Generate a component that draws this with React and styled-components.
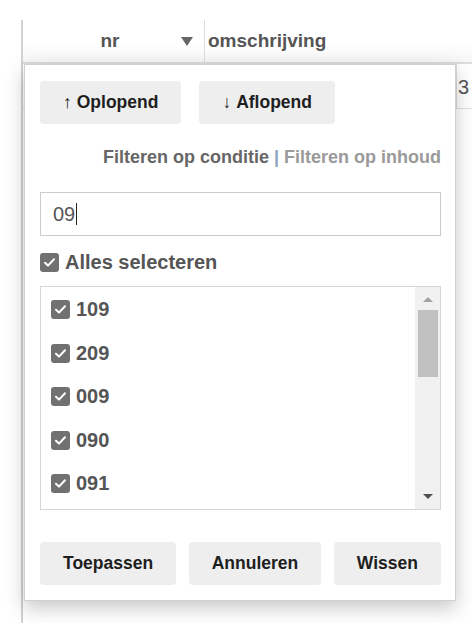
import React from 'react';
import styled, { createGlobalStyle } from 'styled-components';

const GlobalStyle = createGlobalStyle`
  html, body {
    margin: 0;
    padding: 0;
    background: #fff;
  }
  body {
    font-family: "Liberation Sans", Arial, sans-serif;
    color: #555;
  }
`;

const Page = styled.div`
  position: relative;
  width: 472px;
  height: 623px;
  overflow: hidden;
  padding: 20px 0 0 21px;
  box-sizing: border-box;
`;

const Grid = styled.div`
  height: 100%;
  border-left: 2px solid #d2d2d2;
`;

const HeaderRow = styled.div`
  display: flex;
  height: 42px;
  border-bottom: 2px solid #dcdcdc;
  background: linear-gradient(#fff 55%, #f6f6f6);
`;

const HeaderCell = styled.div`
  display: flex;
  align-items: center;
  box-sizing: border-box;
  width: ${(p) => p.$width || 'auto'};
  padding-left: ${(p) => p.$padLeft || '0'};
  border-right: ${(p) => (p.$divider ? '1px solid #dcdcdc' : 'none')};
  font-size: 19px;
  font-weight: bold;
  color: #555;
`;

const HeaderLabel = styled.span`
  flex: 1;
  text-align: ${(p) => p.$align || 'left'};
`;

const SortTriangle = styled.span`
  width: 0;
  height: 0;
  margin: 1px 11px 0 0;
  border-left: 6px solid transparent;
  border-right: 6px solid transparent;
  border-top: 9px solid #666;
`;

const BodyRow = styled.div`
  display: flex;
  height: 44px;
  border-bottom: 1px solid #e2e2e2;
`;

const BodyCell = styled.div`
  box-sizing: border-box;
  width: ${(p) => p.$width || 'auto'};
  flex: ${(p) => (p.$grow ? 1 : 'none')};
  padding: 13px 0 0 1px;
  border-left: ${(p) => (p.$divider ? '1px solid #dcdcdc' : 'none')};
  font-size: 20px;
  line-height: 20px;
  color: #555;
`;

const Panel = styled.div`
  position: absolute;
  left: 24px;
  top: 64px;
  width: 432px;
  height: 537px;
  box-sizing: border-box;
  display: flex;
  flex-direction: column;
  padding: 16px 14px 15px 15px;
  background: #fff;
  border: 1px solid #cfcfcf;
  box-shadow: 0 7px 18px rgba(0, 0, 0, 0.22);
`;

const SortRow = styled.div`
  display: flex;
  gap: 18px;
`;

const GreyButton = styled.button`
  height: 43px;
  padding: 0 ${(p) => p.$pad || '23px'};
  border: none;
  border-radius: 4px;
  background: #eeeeee;
  color: #1e1e1e;
  font-family: "Liberation Sans", Arial, sans-serif;
  font-size: 17.5px;
  font-weight: bold;
  cursor: pointer;
`;

const Arrow = styled.span`
  font-weight: normal;
  margin-right: 5px;
`;

const FilterTabs = styled.div`
  margin-top: 22px;
  text-align: right;
  font-size: 18px;
  line-height: 22px;
  font-weight: bold;
`;

const FilterTab = styled.span`
  color: ${(p) => (p.$active ? '#666' : '#9a9a9a')};
`;

const Separator = styled.span`
  color: #8aa4c0;
`;

const SearchBox = styled.div`
  margin-top: 24px;
  height: 44px;
  box-sizing: border-box;
  display: flex;
  align-items: center;
  padding-left: 12px;
  border: 1px solid #cccccc;
  font-size: 20px;
  color: #555;
`;

const Caret = styled.span`
  width: 1px;
  height: 22px;
  margin-left: 1px;
  background: #222;
`;

const CheckRow = styled.label`
  display: flex;
  align-items: center;
  gap: 6px;
  height: ${(p) => p.$height || '26px'};
  padding-top: ${(p) => p.$nudge || '0'};
  box-sizing: border-box;
  font-size: 20px;
  font-weight: bold;
  color: #555;
`;

const SelectAll = styled(CheckRow)`
  margin-top: 13px;
`;

const Box = styled.span`
  width: 19px;
  height: 19px;
  flex: none;
  display: flex;
  align-items: center;
  justify-content: center;
  border-radius: 3px;
  background: #717171;
`;

const ListBox = styled.div`
  margin-top: 11px;
  height: 224px;
  box-sizing: border-box;
  display: flex;
  border: 1px solid #d6d6d6;
`;

const Items = styled.div`
  flex: 1;
  padding-left: 10px;
  overflow: hidden;
`;

const Scrollbar = styled.div`
  width: 25px;
  display: flex;
  flex-direction: column;
  align-items: center;
  background: #f1f1f1;
`;

const ScrollArrow = styled.span`
  width: 0;
  height: 0;
  margin: ${(p) => (p.$down ? 'auto 0 10px' : '10px 0 8px')};
  border-left: 5px solid transparent;
  border-right: 5px solid transparent;
  ${(p) =>
    p.$down
      ? 'border-top: 5px solid #505050;'
      : 'border-bottom: 5px solid #a3a3a3;'}
`;

const Thumb = styled.div`
  width: 20px;
  height: 67px;
  background: #c1c1c1;
`;

const Actions = styled.div`
  margin-top: auto;
  display: flex;
  justify-content: space-between;
`;

function CheckBox() {
  return (
    <Box>
      <svg width="13" height="13" viewBox="0 0 13 13">
        <path
          d="M2 6.8 L5 9.6 L11 3.2"
          fill="none"
          stroke="#fff"
          strokeWidth="2"
          strokeLinecap="round"
          strokeLinejoin="round"
        />
      </svg>
    </Box>
  );
}

const values = ['109', '209', '009', '090', '091'];

export default function App() {
  return (
    <>
      <GlobalStyle />
      <Page>
        <Grid>
          <HeaderRow>
            <HeaderCell $width="182px" $padLeft="16px" $divider>
              <HeaderLabel $align="center">nr</HeaderLabel>
              <SortTriangle />
            </HeaderCell>
            <HeaderCell $padLeft="3px">
              <HeaderLabel>omschrijving</HeaderLabel>
            </HeaderCell>
          </HeaderRow>
          <BodyRow>
            <BodyCell $width="433px" />
            <BodyCell $grow $divider>
              3
            </BodyCell>
          </BodyRow>
        </Grid>

        <Panel>
          <SortRow>
            <GreyButton $pad="23px">
              <Arrow>↑</Arrow>Oplopend
            </GreyButton>
            <GreyButton $pad="23px">
              <Arrow>↓</Arrow>Aflopend
            </GreyButton>
          </SortRow>

          <FilterTabs>
            <FilterTab $active>Filteren op conditie</FilterTab>{' '}
            <Separator>|</Separator> <FilterTab>Filteren op inhoud</FilterTab>
          </FilterTabs>

          <SearchBox>
            09
            <Caret />
          </SearchBox>

          <SelectAll>
            <CheckBox />
            Alles selecteren
          </SelectAll>

          <ListBox>
            <Items>
              {values.map((v) => (
                <CheckRow key={v} $height="43.5px" $nudge="2px">
                  <CheckBox />
                  {v}
                </CheckRow>
              ))}
            </Items>
            <Scrollbar>
              <ScrollArrow />
              <Thumb />
              <ScrollArrow $down />
            </Scrollbar>
          </ListBox>

          <Actions>
            <GreyButton>Toepassen</GreyButton>
            <GreyButton>Annuleren</GreyButton>
            <GreyButton>Wissen</GreyButton>
          </Actions>
        </Panel>
      </Page>
    </>
  );
}
